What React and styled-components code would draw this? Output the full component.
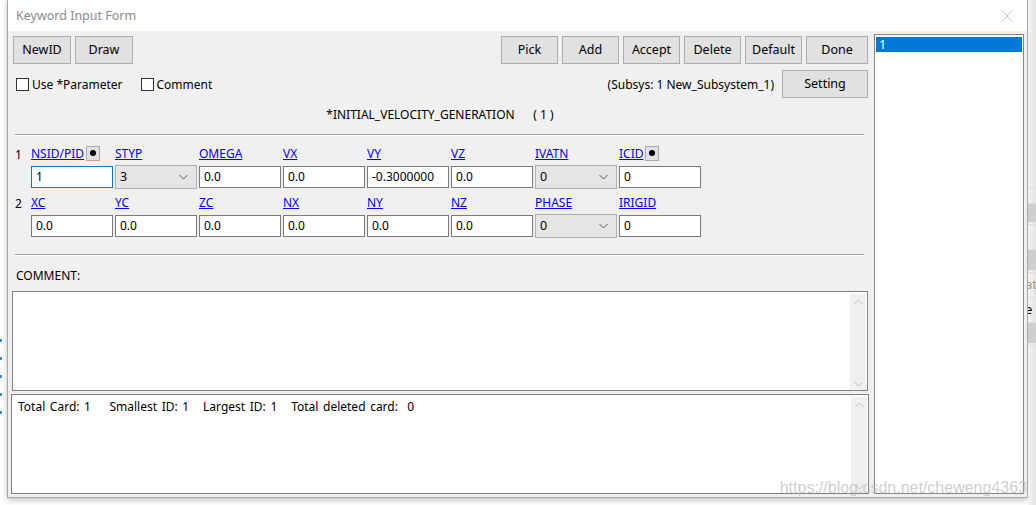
import styled, { createGlobalStyle } from "styled-components";

const GlobalStyle = createGlobalStyle`
  html, body {
    margin: 0;
    padding: 0;
    background: #fff;
  }
  body {
    font-family: "Noto Sans", "Open Sans", sans-serif;
    font-size: 12px;
    color: #000;
  }
`;

const row1 = [
  { label: "NSID/PID", value: "1", focus: true, dot: true },
  { label: "STYP", value: "3", select: true },
  { label: "OMEGA", value: "0.0" },
  { label: "VX", value: "0.0" },
  { label: "VY", value: "-0.3000000" },
  { label: "VZ", value: "0.0" },
  { label: "IVATN", value: "0", select: true },
  { label: "ICID", value: "0", dot: true },
];

const row2 = [
  { label: "XC", value: "0.0" },
  { label: "YC", value: "0.0" },
  { label: "ZC", value: "0.0" },
  { label: "NX", value: "0.0" },
  { label: "NY", value: "0.0" },
  { label: "NZ", value: "0.0" },
  { label: "PHASE", value: "0", select: true },
  { label: "IRIGID", value: "0" },
];

const Chevron = ({ up }) => (
  <svg width="9" height="6" viewBox="0 0 9 6">
    <path
      d={up ? "M0.5 5 L4.5 1 L8.5 5" : "M0.5 1 L4.5 5 L8.5 1"}
      fill="none"
      stroke="currentColor"
      strokeWidth="1"
    />
  </svg>
);

const CardRow = ({ num, fields }) => (
  <>
    <LabelRow>
      <RowNum>{num}</RowNum>
      {fields.map((f) => (
        <LabelCell key={f.label}>
          <FieldLink>{f.label}</FieldLink>
          {f.dot && (
            <DotButton>
              <Dot />
            </DotButton>
          )}
        </LabelCell>
      ))}
    </LabelRow>
    <InputRow>
      {fields.map((f) =>
        f.select ? (
          <Select key={f.label}>
            <span>{f.value}</span>
            <Chevron />
          </Select>
        ) : (
          <Field key={f.label} $focus={f.focus}>
            {f.value}
          </Field>
        )
      )}
    </InputRow>
  </>
);

const App = () => {
  return (
    <Screen>
      <GlobalStyle />
      <LeftEdge>
        {[0, 1, 2, 3, 4].map((i) => (
          <BlueDot key={i} />
        ))}
      </LeftEdge>
      <Window>
        <TitleBar>
          <span>Keyword Input Form</span>
          <CloseX>
            <svg width="12" height="12" viewBox="0 0 12 12">
              <path d="M0.5 0.5 L11.5 11.5 M11.5 0.5 L0.5 11.5" stroke="#c8c8c8" strokeWidth="1" />
            </svg>
          </CloseX>
        </TitleBar>
        <Body>
          <Main>
            <Toolbar>
              <Group>
                <Button $w={58}>NewID</Button>
                <Button $w={58}>Draw</Button>
              </Group>
              <Group>
                <Button>Pick</Button>
                <Button>Add</Button>
                <Button>Accept</Button>
                <Button>Delete</Button>
                <Button>Default</Button>
                <Button $w={62}>Done</Button>
              </Group>
            </Toolbar>
            <OptionRow>
              <Group $gap={18}>
                <Check>
                  <Box />
                  Use *Parameter
                </Check>
                <Check>
                  <Box />
                  Comment
                </Check>
              </Group>
              <Group $gap={8}>
                <Subsys>(Subsys: 1 New_Subsystem_1)</Subsys>
                <Button $w={86}>Setting</Button>
              </Group>
            </OptionRow>
            <KeywordTitle>*INITIAL_VELOCITY_GENERATION&nbsp;&nbsp;&nbsp;&nbsp;&nbsp;&nbsp;( 1 )</KeywordTitle>
            <Separator />
            <Cards>
              <CardRow num="1" fields={row1} />
              <CardRow num="2" fields={row2} />
            </Cards>
            <Separator />
            <CommentLabel>COMMENT:</CommentLabel>
            <TextBox $inset>
              <StatusText />
              <ScrollTrack>
                <Chevron up />
                <Chevron />
              </ScrollTrack>
            </TextBox>
            <TextBox>
              <StatusText>
                Total Card: 1&nbsp;&nbsp;&nbsp;&nbsp;Smallest ID: 1&nbsp;&nbsp;&nbsp;Largest ID: 1&nbsp;&nbsp;&nbsp;Total deleted card:&nbsp;&nbsp;0
              </StatusText>
              <ScrollTrack>
                <Chevron up />
                <Chevron />
              </ScrollTrack>
            </TextBox>
          </Main>
          <IdList>
            <ListItem $selected>1</ListItem>
          </IdList>
        </Body>
      </Window>
      <RightEdge>
        <Band $h={12} />
        <Band $h={18} $dark />
        <Band $h={22} />
        <Band $h={20} $dark />
        <Band $h={22} $text>at</Band>
        <Band $h={22} $text $black>e</Band>
        <Band $h={20} $dark />
        <Band $h={60} />
      </RightEdge>
      <Watermark>https://blog.csdn.net/cheweng4363</Watermark>
    </Screen>
  );
};

const Screen = styled.div`
  position: relative;
  width: 1036px;
  height: 505px;
  display: flex;
  align-items: flex-start;
  background: #fff;
  overflow: hidden;
`;

const LeftEdge = styled.div`
  width: 7px;
  flex-shrink: 0;
  height: 100%;
  display: flex;
  flex-direction: column;
  gap: 15px;
  padding-top: 339px;
  box-sizing: border-box;
`;

const BlueDot = styled.div`
  width: 2px;
  height: 3px;
  background: #3c8fd6;
`;

const Window = styled.div`
  width: 1021px;
  flex-shrink: 0;
  height: 498px;
  box-sizing: border-box;
  border: 1px solid #a8a8a8;
  border-top: none;
  display: flex;
  flex-direction: column;
  box-shadow: 0 2px 6px rgba(0, 0, 0, 0.25);
  background: #f0f0f0;
`;

const TitleBar = styled.div`
  height: 31px;
  flex-shrink: 0;
  background: #fff;
  display: flex;
  align-items: center;
  justify-content: space-between;
  padding: 0 10px 0 8px;
  color: #8c8c8c;
  font-size: 12.5px;
`;

const CloseX = styled.div`
  display: flex;
  align-items: center;
  margin-right: 4px;
`;

const Body = styled.div`
  flex: 1;
  display: flex;
  gap: 5px;
  padding: 3px 3px 3px 3px;
  min-height: 0;
`;

const Main = styled.div`
  flex: 1;
  display: flex;
  flex-direction: column;
  min-width: 0;
`;

const Toolbar = styled.div`
  display: flex;
  justify-content: space-between;
  align-items: center;
  padding: 2px 1px 0 2px;
`;

const Group = styled.div`
  display: flex;
  align-items: center;
  gap: ${(p) => p.$gap ?? 4}px;
`;

const Button = styled.div`
  width: ${(p) => p.$w ?? 57}px;
  height: 28px;
  box-sizing: border-box;
  border: 1px solid #adadad;
  background: #e1e1e1;
  display: flex;
  align-items: center;
  justify-content: center;
  font-size: 12.5px;
  padding-bottom: 1px;
`;

const OptionRow = styled.div`
  display: flex;
  justify-content: space-between;
  align-items: center;
  padding: 6px 1px 0 5px;
`;

const Check = styled.label`
  display: flex;
  align-items: center;
  gap: 3px;
  font-size: 12px;
`;

const Box = styled.span`
  width: 13px;
  height: 13px;
  box-sizing: border-box;
  border: 1px solid #333;
  background: #fff;
`;

const Subsys = styled.span`
  font-size: 12px;
`;

const KeywordTitle = styled.div`
  text-align: center;
  font-size: 12px;
  margin-top: 8px;
  height: 18px;
  line-height: 18px;
`;

const Separator = styled.div`
  margin: 10px 5px 0 4px;
  height: 1px;
  background: #a0a0a0;
  border-bottom: 1px solid #fff;
`;

const Cards = styled.div`
  display: flex;
  flex-direction: column;
  padding: 9px 0 0 20px;
  height: 109px;
  box-sizing: border-box;
`;

const LabelRow = styled.div`
  position: relative;
  display: grid;
  grid-template-columns: repeat(8, 82px);
  column-gap: 2px;
  height: 17px;
  align-items: center;
`;

const RowNum = styled.span`
  position: absolute;
  left: -16px;
  top: 1px;
  font-size: 12px;
`;

const LabelCell = styled.div`
  display: flex;
  align-items: center;
  gap: 2px;
`;

const FieldLink = styled.span`
  color: #0000ff;
  text-decoration: underline;
  font-size: 12px;
`;

const DotButton = styled.span`
  width: 14px;
  height: 15px;
  box-sizing: border-box;
  border: 1px solid #adadad;
  background: #e1e1e1;
  display: flex;
  align-items: center;
  justify-content: center;
`;

const Dot = styled.span`
  width: 6px;
  height: 6px;
  border-radius: 50%;
  background: #000;
`;

const InputRow = styled.div`
  display: grid;
  grid-template-columns: repeat(8, 82px);
  column-gap: 2px;
  align-items: center;
  height: 24px;
  margin: 3px 0 5px;
`;

const Field = styled.div`
  height: 22px;
  box-sizing: border-box;
  border: 1px solid ${(p) => (p.$focus ? "#0078d7" : "#7a7a7a")};
  background: #fff;
  padding: 0 4px;
  display: flex;
  align-items: center;
  font-size: 12px;
`;

const Select = styled.div`
  height: 24px;
  box-sizing: border-box;
  border: 1px solid #adadad;
  background: #e5e5e5;
  padding: 0 8px 0 4px;
  display: flex;
  align-items: center;
  justify-content: space-between;
  font-size: 12.5px;
  color: #000;
  svg {
    color: #555;
  }
`;

const CommentLabel = styled.div`
  padding: 11px 0 0 5px;
  height: 18px;
  line-height: 18px;
  font-size: 12px;
`;

const TextBox = styled.div`
  height: 100px;
  flex-shrink: 0;
  box-sizing: border-box;
  margin: ${(p) => (p.$inset ? "6px 1px 3px 1px" : "0")};
  border: 1px solid #828282;
  background: #fff;
  display: flex;
  justify-content: space-between;
`;

const StatusText = styled.div`
  padding: 3px 0 0 6px;
  font-size: 12px;
  word-spacing: 1.5px;
`;

const ScrollTrack = styled.div`
  width: 16px;
  margin: 2px 1px 0 0;
  background: #f0f0f0;
  display: flex;
  flex-direction: column;
  justify-content: space-between;
  align-items: center;
  padding: 5px 0 3px;
  color: #bdbdbd;
  box-sizing: border-box;
`;

const IdList = styled.div`
  width: 150px;
  flex-shrink: 0;
  box-sizing: border-box;
  border: 1px solid #828790;
  background: #fff;
  padding: 2px 1px;
`;

const ListItem = styled.div`
  height: 15px;
  line-height: 15px;
  padding-left: 3px;
  font-size: 12.5px;
  background: ${(p) => (p.$selected ? "#0078d7" : "transparent")};
  color: ${(p) => (p.$selected ? "#fff" : "#000")};
`;

const RightEdge = styled.div`
  flex: 1;
  height: 100%;
  padding-top: 188px;
  box-sizing: border-box;
  display: flex;
  flex-direction: column;
  gap: 2px;
  background: linear-gradient(90deg, #f4f4f4, #e2e2e2);
`;

const Band = styled.div`
  height: ${(p) => p.$h}px;
  background: ${(p) => (p.$dark ? "#cfcfcf" : "transparent")};
  border-top: 1px solid #e0e0e0;
  font-size: 13px;
  line-height: ${(p) => p.$h}px;
  color: ${(p) => (p.$black ? "#000" : "#999")};
  overflow: hidden;
  white-space: nowrap;
  text-indent: -3px;
`;

const Watermark = styled.div`
  position: absolute;
  right: 9px;
  bottom: 8px;
  font-family: "Liberation Sans", Arial, sans-serif;
  font-size: 16px;
  color: rgba(190, 190, 190, 0.75);
`;

export default App;
